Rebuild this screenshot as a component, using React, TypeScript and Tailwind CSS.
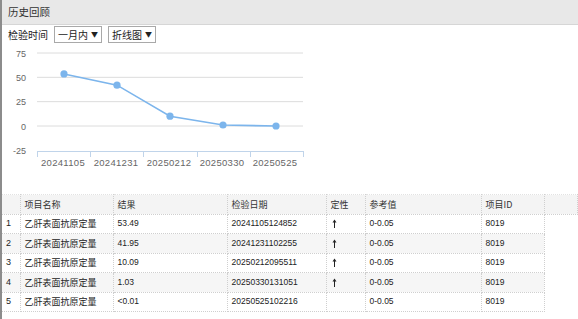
import React from "react";

const rows = [
  { name: "乙肝表面抗原定量", result: "53.49", date: "20241105124852", up: true, ref: "0-0.05", id: "8019" },
  { name: "乙肝表面抗原定量", result: "41.95", date: "20241231102255", up: true, ref: "0-0.05", id: "8019" },
  { name: "乙肝表面抗原定量", result: "10.09", date: "20250212095511", up: true, ref: "0-0.05", id: "8019" },
  { name: "乙肝表面抗原定量", result: "1.03", date: "20250330131051", up: true, ref: "0-0.05", id: "8019" },
  { name: "乙肝表面抗原定量", result: "<0.01", date: "20250525102216", up: false, ref: "0-0.05", id: "8019" },
];

const points = [53.49, 41.95, 10.09, 1.03, 0.01];
const labels = ["20241105", "20241231", "20250212", "20250330", "20250525"];
const yTicks = [75, 50, 25, 0, -25];

const cjk = "font-['Noto_Sans_CJK_SC',sans-serif]";
const num = "font-['Liberation_Sans',sans-serif]";

function toY(v: number) {
  return 125 - (v * 73) / 75;
}

function Select({ label }: { label: string }) {
  return (
    <div className="flex h-[17px] items-center gap-[3px] border border-[#a9a9a9] bg-white px-[3px] text-[10px] text-[#222]">
      <span>{label}</span>
      <span className="text-[7px]">▼</span>
    </div>
  );
}

function UpArrow() {
  return (
    <svg width="5" height="9" viewBox="0 0 5 9" className="block">
      <path d="M2.5 0.5 L0.5 3.5 L4.5 3.5 Z" fill="#222" />
      <line x1="2.5" x2="2.5" y1="3" y2="9" stroke="#222" strokeWidth="1" />
    </svg>
  );
}

function Chart() {
  const xs = [62, 115, 168, 221, 274];
  const line = points.map((v, i) => `${xs[i]},${toY(v)}`).join(" ");
  return (
    <svg width="320" height="126" viewBox="0 44 320 126" className="mt-[2px] block">
      {yTicks.slice(0, 4).map((t) => (
        <line key={t} x1="35" x2="301" y1={toY(t)} y2={toY(t)} stroke="#dcdcdc" strokeWidth="1" />
      ))}
      <line x1="35" x2="301" y1="150.5" y2="150.5" stroke="#c0d4ea" strokeWidth="1" />
      {[35, 88, 141, 195, 248, 301].map((x) => (
        <line key={x} x1={x + 0.5} x2={x + 0.5} y1="150" y2="156" stroke="#c0d4ea" strokeWidth="1" />
      ))}
      {yTicks.map((t) => (
        <text key={t} x="24" y={toY(t) + 3.5} textAnchor="end" fontSize="9" fill="#666" fontFamily="Liberation Sans, sans-serif">
          {t}
        </text>
      ))}
      {labels.map((l, i) => (
        <text key={l} x={xs[i] - 1} y="165" textAnchor="middle" fontSize="9.5" letterSpacing="0.3" fill="#666" fontFamily="Liberation Sans, sans-serif">
          {l}
        </text>
      ))}
      <polyline points={line} fill="none" stroke="#7cb5ec" strokeWidth="1.6" />
      {points.map((v, i) => (
        <circle key={i} cx={xs[i]} cy={toY(v)} r="3.6" fill="#7cb5ec" />
      ))}
    </svg>
  );
}

export default function App() {
  const cell = "border-r border-b border-dotted border-[#cfcfcf] px-[4px] text-left align-middle";
  return (
    <div className={`h-[319px] w-[578px] overflow-hidden border-l-2 border-[#8c8c8c] bg-white ${cjk} text-[#222]`}>
      <div className="flex h-[25px] items-center border-b border-[#d6d6d6] bg-[#e8e8e8] pl-[6px] text-[10.5px] text-[#333]">
        历史回顾
      </div>
      <div className="mt-[1px] flex h-[17px] items-center gap-[6px] pl-[6px] text-[10px]">
        <span>检验时间</span>
        <Select label="一月内" />
        <Select label="折线图" />
      </div>
      <Chart />
      <table className="mt-[23px] w-[576px] table-fixed border-collapse text-[9px]">
        <colgroup>
          <col className="w-[18px]" />
          <col className="w-[93px]" />
          <col className="w-[114px]" />
          <col className="w-[99px]" />
          <col className="w-[39px]" />
          <col className="w-[116px]" />
          <col className="w-[63px]" />
          <col />
        </colgroup>
        <thead>
          <tr className="h-[19.5px] bg-[#f4f4f4] text-[#333]">
            <th className={`${cell} border-t border-t-[#e2e2e2] font-normal`} />
            {["项目名称", "结果", "检验日期", "定性", "参考值", "项目ID", ""].map((h, i) => (
              <th key={i} className={`${cell} border-t border-t-[#e2e2e2] font-normal`}>
                {h}
              </th>
            ))}
          </tr>
        </thead>
        <tbody>
          {rows.map((r, i) => {
            const bg = i % 2 === 1 ? "bg-[#f6f6f6]" : "bg-white";
            const c = `${cell} ${bg}`;
            return (
              <tr key={i} className="h-[19.5px]">
                <td className={`${c} relative text-center ${num} text-[9px]`}>
                  {i === 0 && <span className="absolute top-0 left-[-2px] h-full w-[2px] bg-[#2f4c6e]" />}
                  {i + 1}
                </td>
                <td className={c}>{r.name}</td>
                <td className={`${c} ${num} text-[8.5px]`}>{r.result}</td>
                <td className={`${c} ${num} text-[8.5px]`}>{r.date}</td>
                <td className={`${c} pl-[5px]`}>{r.up && <UpArrow />}</td>
                <td className={`${c} ${num} text-[8.5px]`}>{r.ref}</td>
                <td className={`${c} ${num} text-[8.5px]`}>{r.id}</td>
                <td className="border-none bg-white" />
              </tr>
            );
          })}
        </tbody>
      </table>
    </div>
  );
}
